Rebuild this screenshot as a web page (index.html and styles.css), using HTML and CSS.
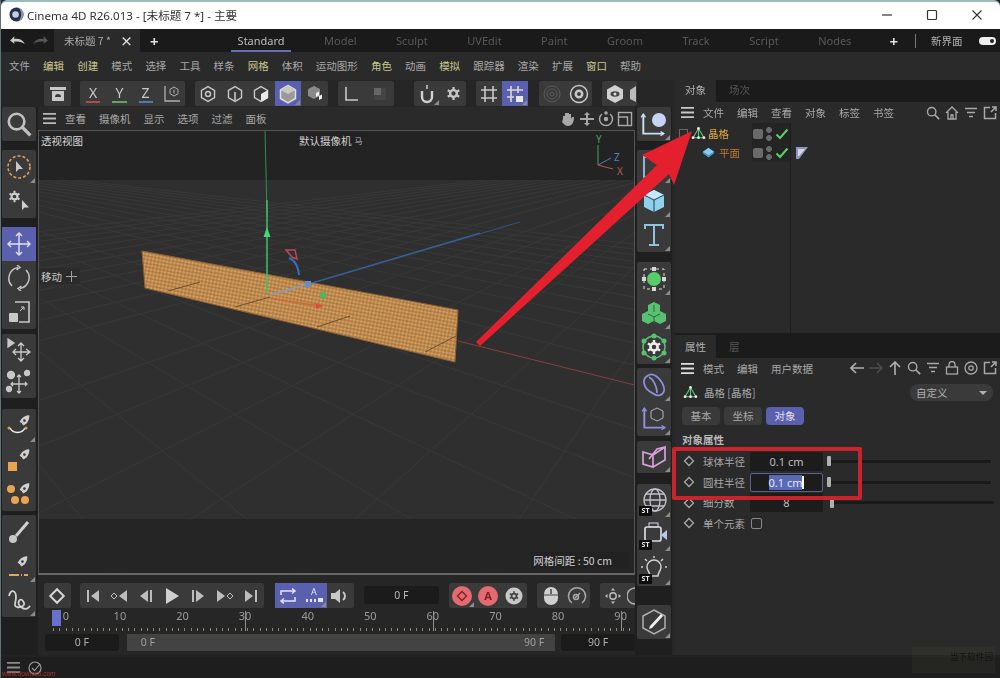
FILE: index.html
```html
<!DOCTYPE html>
<html lang="zh-CN">
<head>
  <meta charset="UTF-8">
  <title>Cinema 4D R26.013</title>
  <link rel="stylesheet" href="styles.css">
</head>
<body>

  <svg class="defs" width="0" height="0">
    <symbol id="burger" viewBox="0 0 16 14"><path d="M1 2h14M1 7h14M1 12h14" stroke="currentColor" stroke-width="2"/></symbol>
    <symbol id="diamond" viewBox="0 0 12 12"><path d="M6 1.500 10.500 6 6 10.500 1.500 6Z" fill="none" stroke="currentColor" stroke-width="1.300"/></symbol>
    <symbol id="gear" viewBox="0 0 16 16"><circle cx="8" cy="8" r="3.600" fill="none" stroke="currentColor" stroke-width="2.600"/><path d="M8 1v2.500M8 12.500V15M1.900 4.500l2.200 1.300M11.900 10.200l2.200 1.300M1.900 11.500l2.200-1.300M11.900 5.800l2.200-1.300" stroke="currentColor" stroke-width="2.400"/></symbol>
    <symbol id="pen" viewBox="0 0 16 16"><path d="M14 1.500c.5 3-1 7-3 9l-3.500 2.500L3 8.500 5.500 5c2-2 5.500-3.700 8.500-3.500Z" fill="currentColor"/><circle cx="8.500" cy="7.500" r="1.500" fill="#3a3a3a"/><path d="M3 13l3-3" stroke="#3a3a3a"/></symbol>
    <symbol id="check" viewBox="0 0 14 12"><path d="M1.500 6.500 5 10l7.500-8.500" fill="none" stroke="currentColor" stroke-width="2"/></symbol>
    <symbol id="lattice" viewBox="0 0 18 18"><path d="M9 3 2.500 14h13ZM9 3v11" fill="none" stroke="#58c878" stroke-width="1.300"/><circle cx="9" cy="3" r="1.700" fill="#e8e8e8"/><circle cx="2.500" cy="14" r="1.700" fill="#e8e8e8"/><circle cx="15.500" cy="14" r="1.700" fill="#e8e8e8"/><circle cx="9" cy="14" r="1.700" fill="#e8e8e8"/></symbol>
    <symbol id="search" viewBox="0 0 16 16"><circle cx="6.500" cy="6.500" r="4.800" fill="none" stroke="currentColor" stroke-width="1.600"/><path d="m10 10 5 5" stroke="currentColor" stroke-width="2"/></symbol>
    <symbol id="expand" viewBox="0 0 14 14"><path d="M7 1.500H1.500v11h11V7M8 6l5-5M9 1h4v4" fill="none" stroke="currentColor" stroke-width="1.500"/></symbol>
    <symbol id="filter" viewBox="0 0 14 14"><path d="M1 2.500h12M3 6.500h8M5 10.500h4" stroke="currentColor" stroke-width="1.700"/></symbol>
    <symbol id="cube" viewBox="0 0 22 22"><path d="M11 2 19 6.500v9L11 20l-8-4.500v-9Z" fill="none" stroke="currentColor" stroke-width="1.700"/></symbol>
    <symbol id="axis" viewBox="0 0 26 26"><path d="M4 3v18h19" fill="none" stroke="currentColor" stroke-width="1.800"/><path d="m2 6 2-3 2 3M20 19l3 2-3 2" fill="none" stroke="currentColor" stroke-width="1.300"/></symbol>
  </svg>

  <div class="window">

    <header class="titlebar">
      <svg class="app-logo" viewBox="0 0 16 16"><circle cx="8" cy="8" r="7.500" fill="#25304d"/><path d="M8 .5a7.500 7.500 0 0 1 0 15A5 7.500 0 0 0 8 .5Z" fill="#8a97b8"/><circle cx="7" cy="8" r="3.500" fill="#c9cedd"/></svg>
      <span class="title-text">Cinema 4D R26.013 - [未标题 7 *] - 主要</span>
      <div class="win-btns">
        <svg viewBox="0 0 12 12"><path d="M1 6h10" stroke="#333" stroke-width="1.200"/></svg>
        <svg viewBox="0 0 12 12"><rect x="1.500" y="1.500" width="9" height="9" rx="1" fill="none" stroke="#333" stroke-width="1.200"/></svg>
        <svg viewBox="0 0 12 12"><path d="m1.500 1.500 9 9m0-9-9 9" stroke="#333" stroke-width="1.100"/></svg>
      </div>
    </header>

    <div class="layoutbar">
      <svg class="undo" viewBox="0 0 16 10"><path d="M1 5h0l4-4v2.500c5-.5 8 1 10 5-3-2.500-6-3-10-2.500V8Z" fill="#c8c8c8"/></svg>
      <svg class="redo" viewBox="0 0 16 10"><path d="M15 5l-4-4v2.500c-5-.5-8 1-10 5 3-2.500 6-3 10-2.500V8Z" fill="#555"/></svg>
      <div class="doc-tab"><span>未标题 7 *</span><b>×</b></div>
      <span class="plus plus-doc">+</span>
      <nav class="layouts">
        <span class="layout on">Standard</span>
        <span class="layout">Model</span>
        <span class="layout">Sculpt</span>
        <span class="layout">UVEdit</span>
        <span class="layout">Paint</span>
        <span class="layout">Groom</span>
        <span class="layout">Track</span>
        <span class="layout">Script</span>
        <span class="layout">Nodes</span>
      </nav>
      <span class="plus plus-layout">+</span>
      <i class="bar-sep"></i>
      <span class="new-ui">新界面</span>
      <span class="toggle"><i></i></span>
    </div>

    <nav class="mainmenu">
      <span>文件</span><span class="hl">编辑</span><span class="hl">创建</span><span>模式</span><span>选择</span><span>工具</span><span>样条</span><span class="hl">网格</span><span>体积</span><span>运动图形</span><span class="hl">角色</span><span>动画</span><span class="hl">模拟</span><span>跟踪器</span><span>渲染</span><span>扩展</span><span class="hl">窗口</span><span>帮助</span>
    </nav>

    <div class="workspace">

      <div class="left-area">
        <div class="toptools">
          <div class="tg g1">
            <div class="b"><svg width="18" height="18" viewBox="0 0 18 18"><path d="M1 2h16v3H1zM3 6h12v10H3z" fill="#c8c8c8"/><path d="M6 12a3 3 0 0 1 6 0Z" fill="#3a3a3a"/></svg></div>
          </div>
          <div class="tg g2">
            <div class="b axis-x">X</div>
            <div class="b axis-y">Y</div>
            <div class="b axis-z">Z</div>
            <div class="b"><svg width="20" height="20" viewBox="0 0 20 20" fill="none" stroke="#b0b0b0"><path d="M3 2v15h15" stroke-width="1.300"/><path d="M12 3l4 2.300v4.400L12 12l-4-2.300V5.300Z"/><path d="M12 5.500v4"/></svg></div>
          </div>
          <div class="tg g3">
            <div class="b"><svg width="18" height="18" color="#c8c8c8"><use href="#cube"/><circle cx="9" cy="9" r="2.500" fill="none" stroke="#c8c8c8" stroke-width="1.400"/></svg></div>
            <div class="b"><svg width="18" height="18" color="#c8c8c8"><use href="#cube"/><path d="M9 7v8" stroke="#c8c8c8" stroke-width="1.600"/></svg></div>
            <div class="b"><svg width="18" height="18" color="#c8c8c8"><use href="#cube"/><path d="m9 9 7-4v8l-7 4Z" fill="#e8e8e8"/></svg></div>
            <div class="b sel tri"><svg width="20" height="20" viewBox="0 0 20 20"><path d="M10 1.500 17.500 6v8.500L10 19l-7.500-4.500V6Z" fill="#9a9a9a" stroke="#e0e0e0" stroke-width="1.500"/><path d="M10 1.500 17.500 6 10 10 2.500 6Z" fill="#c8c8c8"/></svg></div>
            <div class="b"><svg width="18" height="18" viewBox="0 0 18 18"><path d="M8 1l6 3v7l-6 3-6-3V4Z" fill="#8a8a8a"/><path d="M10 8l3-1.500v4L10 12ZM13 11l3-1.500v4L13 15Z" fill="#f0f0f0"/></svg></div>
          </div>
          <div class="tg g4">
            <div class="b"><svg width="18" height="18" viewBox="0 0 18 18"><path d="M3 2v13h12" fill="none" stroke="#c8c8c8" stroke-width="1.600"/></svg></div>
            <div class="b"><svg width="18" height="18" viewBox="0 0 18 18"><rect x="3" y="3" width="12" height="12" fill="#444"/><rect x="3" y="3" width="7" height="7" fill="#666"/></svg></div>
          </div>
          <div class="tg g5">
            <div class="b tri"><svg width="18" height="20" viewBox="0 0 18 20"><path d="M4 7v6a5 5 0 0 0 10 0V7" fill="none" stroke="#d0d0d0" stroke-width="2.400"/><path d="M9 1v4" stroke="#d0d0d0" stroke-width="1.500"/></svg></div>
            <div class="b"><svg width="15" height="15" color="#c8c8c8"><use href="#gear"/></svg></div>
          </div>
          <div class="tg g6">
            <div class="b"><svg width="18" height="18" viewBox="0 0 18 18"><path d="M5 1v16M13 1v16M1 5h16M1 13h16" stroke="#c8c8c8" stroke-width="1.600"/></svg></div>
            <div class="b sel tri"><svg width="18" height="18" viewBox="0 0 18 18"><path d="M5 1v16M12 1v7M1 5h16M1 12h7" stroke="#d8d8d8" stroke-width="1.600"/><rect x="10" y="11" width="7" height="6" fill="#e8e8e8"/></svg></div>
          </div>
          <div class="tg g7">
            <div class="b"><svg width="18" height="18" viewBox="0 0 18 18" fill="none" stroke="#5c5c5c"><circle cx="9" cy="9" r="8"/><circle cx="9" cy="9" r="5"/><circle cx="9" cy="9" r="2"/></svg></div>
            <div class="b"><svg width="20" height="20" viewBox="0 0 20 20" fill="none" stroke="#c8c8c8" stroke-width="1.500"><circle cx="10" cy="10" r="8.500"/><circle cx="10" cy="10" r="3.200" stroke-width="2.500"/></svg></div>
          </div>
          <div class="tg g8">
            <div class="b"><svg width="18" height="20" viewBox="0 0 18 20"><path d="M9 1l8 4.500v9L9 19l-8-4.500v-9Z" fill="#d0d0d0"/><ellipse cx="9" cy="10" rx="4.500" ry="2.800" fill="#444"/><circle cx="9" cy="10" r="1.500" fill="#ddd"/></svg></div>
            <div class="b half"><svg width="6" height="18" viewBox="0 0 6 18"><path d="M6 1 0 5v9l6 3Z" fill="#bbb"/></svg></div>
          </div>
        </div>

        <div class="mid">
          <aside class="leftcol">
            <div class="lg">
              <div class="lb"><svg width="26" height="26" color="#c0c0c0"><use href="#search"/></svg></div>
            </div>
            <div class="lg">
              <div class="lb tri"><svg width="26" height="26" viewBox="0 0 26 26"><circle cx="13" cy="13" r="11" fill="none" stroke="#d9a05f" stroke-width="1.600" stroke-dasharray="3 2"/><path d="M10 7v11l3-3 4 0Z" fill="#c8c8c8"/></svg></div>
              <div class="lb"><svg width="24" height="24" viewBox="0 0 24 24"><use href="#gear" x="1" y="1" width="13" height="13" color="#d0d0d0"/><path d="M15 11v10l2.500-2.500H22Z" fill="#d0d0d0"/></svg></div>
            </div>
            <div class="lg">
              <div class="lb sel"><svg width="26" height="26" viewBox="0 0 26 26" fill="none" stroke="#dfe1ef" stroke-width="1.400"><path d="M13 2v22M2 13h22M10 5l3-3 3 3M10 21l3 3 3-3M5 10l-3 3 3 3M21 10l3 3-3 3"/></svg></div>
              <div class="lb"><svg width="26" height="26" viewBox="0 0 26 26" fill="none" stroke="#c0c0c0" stroke-width="1.500"><path d="M6 21A11 11 0 0 1 12 2.500M20 5a11 11 0 0 1-6 18.500M11 0l3 2.500L10.500 5M15 26l-3-2.500 3.500-2.500"/></svg></div>
              <div class="lb"><svg width="24" height="24" viewBox="0 0 24 24"><path d="M8 2h14v20H12" fill="none" stroke="#c8c8c8" stroke-width="1.600"/><rect x="2" y="13" width="9" height="9" rx="1" fill="#c8c8c8"/><path d="M13 11l4-4M14 7h3v3" fill="none" stroke="#c8c8c8"/></svg></div>
            </div>
            <div class="lg">
              <div class="lb"><svg width="26" height="26" viewBox="0 0 26 26" fill="none" stroke="#c8c8c8" stroke-width="1.300"><path d="M2 2v8l6-4Z" fill="#c8c8c8"/><path d="M15 6v18M7 15h17M12 9l3-3 3 3M12 21l3 3 3-3M10 12l-3 3 3 3M20 12l4 3-4 3"/></svg></div>
              <div class="lb"><svg width="28" height="28" viewBox="0 0 28 28" fill="none" stroke="#c8c8c8" stroke-width="1.300"><circle cx="6" cy="7" r="3.500" fill="#c8c8c8"/><circle cx="22" cy="5" r="2.500" fill="#c8c8c8"/><circle cx="4" cy="21" r="2.500" fill="#c8c8c8"/><path d="M14 7v18M6 16h16M12 9l2-2 2 2M12 23l2 2 2-2M8 14l-2 2 2 2M20 14l2 2-2 2"/></svg></div>
            </div>
            <div class="lg">
              <div class="lb tri"><svg width="26" height="26" viewBox="0 0 26 26"><use href="#pen" x="11" y="1" width="14" height="14" color="#d0d0d0"/><path d="M4 15c3 6 12 6 15 0" fill="none" stroke="#eee" stroke-width="1.500"/><circle cx="3" cy="15" r="1.500" fill="#e0a040"/><circle cx="20" cy="15" r="1.500" fill="#e0a040"/></svg></div>
              <div class="lb"><svg width="26" height="26" viewBox="0 0 26 26"><use href="#pen" x="11" y="1" width="14" height="14" color="#d0d0d0"/><rect x="2" y="15" width="9" height="9" fill="#e8a550"/></svg></div>
              <div class="lb"><svg width="26" height="26" viewBox="0 0 26 26"><use href="#pen" x="11" y="1" width="14" height="14" color="#d0d0d0"/><circle cx="5" cy="8" r="4" fill="#e8a550"/><circle cx="9" cy="19" r="4" fill="#e8a550"/><circle cx="19" cy="19" r="4" fill="#e8a550"/></svg></div>
            </div>
            <div class="lg">
              <div class="lb"><svg width="26" height="26" viewBox="0 0 26 26"><path d="M22 3 10 17" stroke="#d0d0d0" stroke-width="3"/><circle cx="7" cy="20" r="4" fill="#c8c8c8"/></svg></div>
              <div class="lb tri"><svg width="26" height="26" viewBox="0 0 26 26"><use href="#pen" x="9" y="2" width="14" height="14" color="#d0d0d0"/><path d="M3 22h19" stroke="#e0a860" stroke-width="1.800" stroke-dasharray="10 2 1 2"/></svg></div>
              <div class="lb tri"><svg width="26" height="26" viewBox="0 0 26 26"><path d="M3 9c2-8 7-5 7 1s-3 9 1 10c5 1 9-2 6-6s-7 2-2 6 7 1 9-1" fill="none" stroke="#d0d0d0" stroke-width="1.800"/></svg></div>
            </div>
          </aside>

          <section class="center">
            <div class="viewmenu">
              <svg class="burger" color="#b8b8b8"><use href="#burger"/></svg>
              <span>查看</span><span>摄像机</span><span>显示</span><span>选项</span><span>过滤</span><span>面板</span>
              <div class="view-icons">
                <svg width="16" height="16" viewBox="0 0 16 16"><path d="M3 8V5h2V2h2v5-5h2v5-4h2v5l1-2h2c0 5-2 9-6 9-3 0-4-2-6-4Z" fill="#a8a8a8"/></svg>
                <svg width="16" height="16" viewBox="0 0 16 16"><path d="M8 1l3 3H9v3h6v2H9v3h2l-3 3-3-3h2V9H1V7h6V4H5Z" fill="#a8a8a8"/></svg>
                <svg width="16" height="16" viewBox="0 0 16 16" fill="none" stroke="#a8a8a8" stroke-width="1.500"><path d="M4 3a6.500 6.500 0 1 0 8 0"/><circle cx="8" cy="8" r="1.500" fill="#a8a8a8"/><circle cx="8" cy="2" r="1" fill="#a8a8a8"/></svg>
                <svg width="16" height="16" viewBox="0 0 16 16" fill="none" stroke="#a8a8a8" stroke-width="1.400"><rect x="1.500" y="1.500" width="13" height="13"/><path d="M1.500 6h9v8"/></svg>
              </div>
            </div>

            <div class="viewport">
              <svg class="scene" viewBox="38 130 597 443" width="597" height="443">
                <defs>
                  <pattern id="dots" width="3.600" height="3.600" patternUnits="userSpaceOnUse" patternTransform="rotate(11)">
                    <rect width="3.600" height="3.600" fill="#a97a44"/>
                    <circle cx="1.800" cy="1.800" r="1.450" fill="#d79e5e"/>
                  </pattern>
                </defs>
                <rect x="38" y="130" width="597" height="443" fill="#2f2f2f"/>
                <path class="grid" d="M768 147L-3135 600M768 147L-2935 600M768 147L-2735 600M768 147L-2535 600M768 147L-2335 600M768 147L-2135 600M768 147L-1935 600M768 147L-1735 600M768 147L-1535 600M768 147L-1335 600M768 147L-1135 600M768 147L-935 600M768 147L-535 600M768 147L-335 600M768 147L-135 600M768 147L65 600M768 147L265 600M768 147L465 600M768 147L665 600M-214 147L3747 600M-214 147L3547 600M-214 147L3347 600M-214 147L3147 600M-214 147L2947 600M-214 147L2747 600M-214 147L2547 600M-214 147L2347 600M-214 147L2147 600M-214 147L1947 600M-214 147L1747 600M-214 147L1547 600M-214 147L1147 600M-214 147L947 600M-214 147L747 600M-214 147L547 600M-214 147L347 600M-214 147L147 600"/>
                <rect x="38" y="130" width="597" height="50" fill="#232323"/>
                <rect x="38" y="519" width="597" height="54" fill="#212121" fill-opacity=".72"/>
                <path d="M458 341 635 385" stroke="#84413d"/>
                <path d="M310 284 520 222" stroke="#31527f"/>
                <path d="M265 130 267 215" stroke="#2b9350"/>
                <polygon points="142,251 458,310 455,362 145,288" fill="url(#dots)" stroke="#8b6236"/>
                <path class="plane-lines" d="M168 291 200 282M235 307 270 297M317 327 350 316M425 352 456 336"/>
                <path d="M267 200V293" stroke="#37c46a" stroke-width="1.500"/>
                <path d="M267 227l-3.500 10h7Z" fill="#48d47a"/>
                <path d="M270 295 308 284" stroke="#8a9bb5" stroke-width="1.800"/>
                <path d="M308 284 480 233" stroke="#3a64a0" stroke-width="1.200"/>
                <rect x="305" y="281" width="6" height="6" fill="#5f8fd0"/>
                <path d="M270 298 320 306" stroke="#d8643c" stroke-width="1.500"/>
                <path d="M316 303l7 3-7 3Z" fill="#e04c3c"/>
                <circle cx="323" cy="295" r="3.500" fill="#5bb060"/>
                <path d="M286 250h9l2 9-5-2Z" fill="none" stroke="#b84a55" stroke-width="1.500"/>
                <path d="M289 258c6 2 9 8 10 17" fill="none" stroke="#3a6fc0" stroke-width="2"/>
                <path d="M598 145v20" stroke="#4a9a62"/>
                <path d="M598 165l13-7" stroke="#5a7bb5"/>
                <path d="M598 165l15 4" stroke="#b85a52"/>
                <text class="gz gz-y" x="596" y="143">Y</text>
                <text class="gz gz-z" x="614" y="161">Z</text>
                <text class="gz gz-x" x="617" y="175">X</text>
              </svg>
              <span class="vp-label vp-persp">透视视图</span>
              <span class="vp-label vp-cam">默认摄像机 <i class="cam-icon">马</i></span>
              <span class="vp-label vp-move">移动 <svg width="13" height="13" viewBox="0 0 13 13"><path d="M6.500 1v11M1 6.500h11" stroke="#a0a0a0"/></svg></span>
              <span class="vp-label vp-grid">网格间距 : 50 cm</span>
            </div>

            <div class="timeline">
              <div class="transport">
                <div class="tg tl-key"><div class="b"><svg width="18" height="18" color="#d8d8d8"><use href="#diamond"/></svg></div></div>
                <div class="tg tl-play">
                  <div class="pb"><svg width="14" height="14" viewBox="0 0 14 14"><path d="M1 1h2v12H1zM13 1v12L5 7Z" fill="#bdbdbd"/></svg></div>
                  <div class="pb"><svg width="18" height="14" viewBox="0 0 18 14"><path d="M17 1v12L9 7Z" fill="#bdbdbd"/><path d="M4 4 7 7 4 10 1 7Z" fill="none" stroke="#bdbdbd"/></svg></div>
                  <div class="pb"><svg width="14" height="14" viewBox="0 0 14 14"><path d="M11 1h2v12h-2zM9 1v12L1 7Z" fill="#bdbdbd"/></svg></div>
                  <div class="pb"><svg width="16" height="18" viewBox="0 0 16 18"><path d="M2 1v16l13-8Z" fill="#d0d0d0"/></svg></div>
                  <div class="pb"><svg width="14" height="14" viewBox="0 0 14 14"><path d="M1 1h2v12H1zM5 1v12l8-6Z" fill="#bdbdbd"/></svg></div>
                  <div class="pb"><svg width="18" height="14" viewBox="0 0 18 14"><path d="M1 1v12l8-6Z" fill="#bdbdbd"/><path d="M14 4l3 3-3 3-3-3Z" fill="none" stroke="#bdbdbd"/></svg></div>
                  <div class="pb"><svg width="14" height="14" viewBox="0 0 14 14"><path d="M11 1h2v12h-2zM1 1v12l8-6Z" fill="#bdbdbd"/></svg></div>
                </div>
                <div class="tg tl-loop">
                  <div class="b sel"><svg width="18" height="18" viewBox="0 0 18 18" fill="none" stroke="#e4e4f4" stroke-width="1.500"><path d="M2 8V4h13M13 1.500 16 4l-3 2.500M16 10v4H3M5 11.500 2 14l3 2.500"/></svg></div>
                  <div class="b sel tri">
                    <svg width="20" height="20" viewBox="0 0 20 20"><text class="loop-a" x="7" y="9">A</text><path d="M2 13h2v3H2zM6 13h2v3H6zM10 13h2v3h-2zM14 12h5v4h-5z" fill="#e4e4f4"/></svg>
                  </div>
                  <div class="b"><svg width="20" height="18" viewBox="0 0 20 18"><path d="M1 6h4l5-4v14l-5-4H1Z" fill="#c8c8c8"/><path d="M13 5a5 5 0 0 1 0 8" fill="none" stroke="#c8c8c8" stroke-width="2"/></svg></div>
                </div>
                <div class="frame-field">0 F</div>
                <div class="tg tl-rec">
                  <div class="b tri"><span class="rec"><svg width="12" height="12" color="#7c2026"><use href="#diamond"/></svg></span></div>
                  <div class="b"><span class="rec rec-a">A</span></div>
                  <div class="b"><svg width="20" height="20" viewBox="0 0 20 20"><circle cx="10" cy="10" r="8.500" fill="#c8c8c8"/><use href="#gear" x="4.500" y="4.500" width="11" height="11" color="#444"/></svg></div>
                </div>
                <div class="tg tl-auto">
                  <div class="b"><svg width="16" height="20" viewBox="0 0 16 20"><rect x="1" y="1" width="14" height="18" rx="7" fill="#d0d0d0"/><path d="M8 3v5" stroke="#444" stroke-width="1.500"/><path d="M1 9h14" stroke="#444"/></svg></div>
                  <div class="b"><svg width="20" height="20" viewBox="0 0 20 20" fill="none" stroke="#a8a8a8" stroke-width="1.500"><path d="M5 17A8.500 8.500 0 1 1 15 17"/><path d="m8 12 5-5"/><circle cx="9" cy="11" r="2.500"/></svg></div>
                </div>
                <div class="tg tl-nav">
                  <div class="b"><svg width="18" height="18" viewBox="0 0 18 18" fill="#c0c0c0"><circle cx="9" cy="9" r="3.200" fill="none" stroke="#c0c0c0" stroke-width="1.400"/><path d="M9 1l2 2.500H7ZM9 17l2-2.500H7ZM1 9l2.500-2v4ZM17 9l-2.500-2v4Z"/></svg></div>
                  <div class="b half"><svg width="8" height="18" viewBox="0 0 8 18"><path d="M8 1A8 8 0 0 0 8 17" fill="none" stroke="#b0b0b0" stroke-width="1.500"/></svg></div>
                </div>
              </div>

              <div class="ruler">
                <span class="playhead"></span>
                <span class="first">0</span><span>10</span><span>20</span><span class="major">30</span><span>40</span><span>50</span><span class="major">60</span><span>70</span><span>80</span><span class="major">90</span>
              </div>

              <div class="range">
                <div class="range-field">0 F</div>
                <div class="range-bar"><span>0 F</span><span>90 F</span></div>
                <div class="range-field">90 F</div>
              </div>
            </div>
          </section>

          <aside class="rightcol">
            <div class="lg rg1">
              <div class="lb tri"><svg width="30" height="30" viewBox="0 0 30 30"><use href="#axis" width="28" height="28" y="2" color="#c8e0f0"/><circle cx="20" cy="11" r="7" fill="#c8d4f4"/></svg></div>
            </div>
            <div class="lg rg2">
              <div class="lb tri"><svg width="26" height="26" viewBox="0 0 26 26"><rect x="3" y="3" width="20" height="20" fill="none" stroke="#8fb4d0" stroke-width="2"/></svg></div>
              <div class="lb tri"><svg width="26" height="26" viewBox="0 0 26 26"><path d="M13 2 23 7v12l-10 5L3 19V7Z" fill="#8fd0ee"/><path d="M13 2 23 7l-10 5L3 7Z" fill="#c4e8f8"/><path d="M13 12v12" stroke="#2d3a44"/><path d="M3 7l10 5 10-5" fill="none" stroke="#2d3a44"/></svg></div>
              <div class="lb tri"><svg width="26" height="26" viewBox="0 0 26 26"><path d="M4 7V3h18v4M13 3v20M8 23h10" fill="none" stroke="#8cc4dc" stroke-width="2"/></svg></div>
            </div>
            <div class="lg rg3">
              <div class="lb tri"><svg width="28" height="28" viewBox="0 0 28 28"><rect x="4" y="4" width="20" height="20" fill="none" stroke="#ddd" stroke-dasharray="3 3"/><circle cx="14" cy="14" r="7" fill="#58cc6c"/><path d="M12 2h4v4h-4zM2 12h4v4H2zM22 12h4v4h-4zM12 22h4v4h-4z" fill="#d8d8d8"/></svg></div>
              <div class="lb tri"><svg width="26" height="26" viewBox="0 0 26 26"><path d="M13 2l6 3v6l6 3v7l-6 3-6-3-6 3-6-3v-7l6-3V5Z" fill="#58c070"/><path d="M7 14l6 3 6-3M13 5v7M13 17v7" stroke="#2d6a3a" fill="none"/></svg></div>
              <div class="lb tri"><svg width="28" height="28" viewBox="0 0 28 28"><circle cx="14" cy="14" r="11" fill="none" stroke="#58c070" stroke-width="1.500"/><use href="#gear" x="6" y="6" width="16" height="16" color="#eee"/><circle cx="14" cy="3" r="2.500" fill="#58c070"/><circle cx="14" cy="25" r="2.500" fill="#58c070"/><circle cx="4" cy="8" r="2.500" fill="#58c070"/><circle cx="24" cy="8" r="2.500" fill="#58c070"/><circle cx="4" cy="20" r="2.500" fill="#58c070"/><circle cx="24" cy="20" r="2.500" fill="#58c070"/></svg></div>
            </div>
            <div class="lg rg4">
              <div class="lb tri"><svg width="26" height="26" viewBox="0 0 26 26" fill="none" stroke="#8f8fe0" stroke-width="1.700"><path d="M3 11C2 5 9 1 13 3c5 2 11 10 10 16-1 4-6 6-10 3C8 19 4 17 3 11Z"/><path d="M8 5c4 2 8 9 8 16"/></svg></div>
              <div class="lb tri"><svg width="28" height="28" viewBox="0 0 28 28"><use href="#axis" width="28" height="28" color="#8f8fe0"/><path d="M17 3l6 3v7l-6 3-6-3V6Z" fill="none" stroke="#b0b0c0"/></svg></div>
            </div>
            <div class="lg rg5">
              <div class="lb tri"><svg width="26" height="26" viewBox="0 0 26 26" fill="none" stroke="#d8a0d8" stroke-width="1.700"><path d="M2 8l10 3v12L2 20ZM12 11 24 3v13l-12 7M8 15l8-10 8-2"/></svg></div>
            </div>
            <div class="lg rg6">
              <div class="lb tri"><svg width="28" height="28" viewBox="0 0 28 28" fill="none" stroke="#c0c0c8" stroke-width="1.300"><circle cx="15" cy="13" r="11"/><ellipse cx="15" cy="13" rx="5" ry="11"/><path d="M4 13h22M6 7h18M6 19h18"/></svg><b class="st">ST</b></div>
              <div class="lb tri"><svg width="28" height="28" viewBox="0 0 28 28"><rect x="5" y="6" width="16" height="14" rx="2" fill="none" stroke="#d8d8e4" stroke-width="1.700"/><path d="M22 13l5-4v10l-5-4Z" fill="#b8c8f0"/><rect x="9" y="2" width="9" height="4" fill="none" stroke="#d8d8e4"/></svg><b class="st">ST</b></div>
              <div class="lb tri"><svg width="28" height="28" viewBox="0 0 28 28" fill="none" stroke="#d0d0d0" stroke-width="1.500"><path d="M10 21c0-4-3-5-3-9a7 7 0 0 1 14 0c0 4-3 5-3 9ZM14 1v2M3 12H1M27 12h-2M5 4l2 2M23 4l-2 2"/></svg><b class="st">ST</b></div>
            </div>
            <div class="lg rg7">
              <div class="lb tri"><svg width="28" height="28" viewBox="0 0 28 28"><path d="M14 2 25 8v12l-11 6-11-6V8Z" fill="none" stroke="#b0b0b0" stroke-width="1.500"/><path d="M10 18 21 6l2 2L12 20l-3 1Z" fill="#f0f0f0"/></svg></div>
            </div>
          </aside>
        </div>
      </div>

      <div class="panels">
        <section class="objects">
          <div class="ptabs"><span class="ptab on">对象</span><span class="ptab">场次</span></div>
          <div class="pmenu">
            <svg class="burger" color="#c8c8c8"><use href="#burger"/></svg>
            <span>文件</span><span>编辑</span><span>查看</span><span>对象</span><span>标签</span><span>书签</span>
            <div class="picons">
              <svg color="#a8a8a8"><use href="#search"/></svg>
              <svg viewBox="0 0 14 14" fill="none" stroke="#a8a8a8" stroke-width="1.300"><path d="M1 7 7 1l6 6M3 6v7h8V6M6 13V9h2v4"/></svg>
              <svg color="#a8a8a8"><use href="#filter"/></svg>
              <svg color="#a8a8a8"><use href="#expand"/></svg>
            </div>
          </div>
          <div class="tree">
            <div class="tree-names">
              <div class="node">
                <i class="fold"></i>
                <svg class="node-icon"><use href="#lattice"/></svg>
                <span class="name-lattice">晶格</span>
              </div>
              <div class="node node-child">
                <svg class="node-icon plane-icon" viewBox="0 0 16 16"><path d="M8 2l7 5-7 5-7-5Z" fill="#80cdf0"/><path d="M1 7l7 5 7-5v2l-7 5-7-5Z" fill="#4a9ccc"/></svg>
                <span class="name-plane">平面</span>
              </div>
              <div class="tags">
                <div class="tag-row"><i class="vis-box"></i><i class="vis-dots"></i><svg width="14" height="12" color="#5fd067"><use href="#check"/></svg></div>
                <div class="tag-row"><i class="vis-box"></i><i class="vis-dots"></i><svg width="14" height="12" color="#5fd067"><use href="#check"/></svg></div>
              </div>
            </div>
            <div class="tree-tags"><svg width="12" height="12" viewBox="0 0 12 12"><path d="M0 0h12L3 12H0Z" fill="#8e94c8"/><path d="M2 2h7L3 9H2Z" fill="#d8d8d8"/></svg></div>
          </div>
        </section>

        <section class="attrs">
          <div class="ptabs"><span class="ptab on">属性</span><span class="ptab">层</span></div>
          <div class="pmenu amenu">
            <svg class="burger" color="#e0e0e0"><use href="#burger"/></svg>
            <span>模式</span><span>编辑</span><span>用户数据</span>
            <div class="picons aicons">
              <svg viewBox="0 0 14 14" fill="none" stroke="#b0b0b0" stroke-width="1.600"><path d="M14 7H1M6 2 1 7l5 5"/></svg>
              <svg viewBox="0 0 14 14" fill="none" stroke="#4a4a4a" stroke-width="1.500"><path d="M0 7h13M8 2l5 5-5 5"/></svg>
              <svg viewBox="0 0 14 14" fill="none" stroke="#b0b0b0" stroke-width="1.600"><path d="M7 14V1M2 6l5-5 5 5"/></svg>
              <svg color="#a8a8a8"><use href="#search"/></svg>
              <svg color="#a8a8a8"><use href="#filter"/></svg>
              <svg viewBox="0 0 14 14" fill="none" stroke="#a8a8a8" stroke-width="1.300"><rect x="1.500" y="6" width="11" height="7"/><path d="M4 6V3.500a3 3 0 0 1 6 0V6"/></svg>
              <svg viewBox="0 0 14 14" fill="none" stroke="#a8a8a8" stroke-width="1.300"><circle cx="7" cy="7" r="6"/><circle cx="7" cy="7" r="2.200"/></svg>
              <svg color="#a8a8a8"><use href="#expand"/></svg>
            </div>
          </div>
          <div class="obj-title">
            <svg class="node-icon"><use href="#lattice"/></svg>
            <span>晶格 [晶格]</span>
            <div class="preset"><span>自定义</span><i></i></div>
          </div>
          <div class="attr-tabs">
            <span>基本</span><span>坐标</span><span class="on">对象</span>
          </div>
          <h3 class="attr-head">对象属性</h3>
          <div class="attr-row">
            <svg class="attr-key" color="#a8a8a8"><use href="#diamond"/></svg>
            <label>球体半径</label>
            <div class="field">0.1 cm</div>
            <i class="handle"></i>
            <i class="track"></i>
          </div>
          <div class="attr-row">
            <svg class="attr-key" color="#a8a8a8"><use href="#diamond"/></svg>
            <label>圆柱半径</label>
            <div class="field editing"><span class="selected">0.1 cm</span><i class="caret"></i></div>
            <i class="handle"></i>
            <i class="track"></i>
          </div>
          <div class="attr-row">
            <svg class="attr-key" color="#a8a8a8"><use href="#diamond"/></svg>
            <label>细分数</label>
            <div class="field">8</div>
            <i class="handle handle-8"></i>
            <i class="track"></i>
          </div>
          <div class="attr-row">
            <svg class="attr-key" color="#a8a8a8"><use href="#diamond"/></svg>
            <label>单个元素</label>
            <i class="checkbox"></i>
          </div>
        </section>
      </div>
    </div>

    <footer class="statusbar">
      <svg class="burger" color="#8a8a8a"><use href="#burger"/></svg>
      <svg class="status-check" viewBox="0 0 14 14" fill="none" stroke="#a0a0a0" stroke-width="1.100"><circle cx="7" cy="7" r="6"/><path d="m4 7 2.500 2.500L12 3"/></svg>
      <span class="wm-left">www.downxia.com</span>
      <span class="wm-right">当下软件园</span>
    </footer>

    <!-- annotations on top of the screenshot -->
    <svg class="arrow" viewBox="0 0 1000 678" width="1000" height="678">
      <polygon points="692,131 642,155 657,165 476,342 480,346 669,174 674,185" fill="#e5202e"/>
    </svg>
    <div class="redbox"></div>
  </div>

</body>
</html>
```

FILE: styles.css
```css
* {
  box-sizing: border-box;
}

html, body {
  margin: 0;
  height: 100%;
}

body {
  width: 1000px;
  height: 678px;
  overflow: hidden;
  background: #262626;
  font-family: "Noto Sans CJK SC", "Noto Sans", sans-serif;
  font-size: 10.5px;
  color: #a8a8a8;
}

i {
  font-style: normal;
}

.defs {
  position: absolute;
}

/* the source is a soft jpeg */
.window {
  position: relative;
  width: 1000px;
  height: 678px;
  display: flex;
  flex-direction: column;
  border-left: 1px solid #5c7478;
  filter: blur(.35px);
}

/* title bar */
.titlebar {
  flex: 0 0 29px;
  display: flex;
  align-items: center;
  background: #fff;
  border-top: 2px solid #9dbcbf;
  border-radius: 6px 6px 0 0;
  padding: 0 0 2px 8px;
}

.app-logo {
  width: 15px;
  height: 15px;
  margin-right: 3px;
}

.title-text {
  font-size: 11.6px;
  color: #333;
  font-family: "Noto Sans", "Noto Sans CJK SC", sans-serif;
}

.win-btns {
  margin-left: auto;
  display: flex;
  gap: 33px;
  padding-right: 17px;
}

.win-btns svg {
  width: 12px;
  height: 12px;
}

/* layout bar */
.layoutbar {
  flex: 0 0 23px;
  display: flex;
  align-items: center;
  background: #1a1a1a;
  position: relative;
}

.undo, .redo {
  width: 17px;
  height: 11px;
}

.undo {
  margin-left: 8px;
}

.redo {
  margin-left: 6px;
}

.doc-tab {
  margin-left: 5px;
  width: 86px;
  height: 23px;
  background: #2a2a2a;
  display: flex;
  align-items: center;
  padding-left: 10px;
  font-size: 10.5px;
  color: #a8a8a8;
}

.doc-tab b {
  margin-left: auto;
  margin-right: 7px;
  font-size: 13px;
  color: #ddd;
}

.plus {
  font: bold 15px "Noto Sans", sans-serif;
  color: #ddd;
}

.plus-doc {
  margin-left: 10px;
}

.layouts {
  display: flex;
  margin-left: 79px;
  gap: 39.500px;
}

.layout {
  position: relative;
  font: 11px "Noto Sans", sans-serif;
  color: #585858;
  line-height: 23px;
}

.layout.on {
  color: #bdbdbd;
}

.layout.on::after {
  content: "";
  position: absolute;
  left: -7px;
  right: -6px;
  bottom: 0;
  height: 2.500px;
  background: #6a6db4;
}

.plus-layout {
  margin-left: 38px;
}

.bar-sep {
  width: 1px;
  height: 14px;
  background: #777;
  margin-left: 17px;
}

.new-ui {
  margin-left: 15px;
  color: #b0b0b0;
}

.toggle {
  margin-left: 16px;
  width: 17px;
  height: 8px;
  border-radius: 4px;
  background: #eee;
  display: flex;
  align-items: center;
  justify-content: flex-end;
  padding-right: 2px;
}

.toggle i {
  width: 4px;
  height: 4px;
  border-radius: 50%;
  background: #222;
}

/* main menu */
.mainmenu {
  flex: 0 0 28px;
  display: flex;
  align-items: center;
  gap: 13.100px;
  padding: 0 0 2px 8px;
  background: #2a2a2a;
}

.mainmenu .hl {
  color: #c8c88c;
}

/* workspace */
.workspace {
  flex: 1;
  display: flex;
  min-height: 0;
}

.left-area {
  width: 671px;
  display: flex;
  flex-direction: column;
}

.toptools {
  flex: 0 0 27px;
  display: flex;
  align-items: center;
  padding-left: 43px;
  background: #262626;
}

.tg {
  display: flex;
  height: 25px;
  background: #3a3a3a;
  border-radius: 2px;
}

.g1 { width: 27px; }
.g2 { width: 105px; margin-left: 9px; }
.g3 { width: 133px; margin-left: 10px; }
.g4 { width: 56px; margin-left: 10px; }
.g5 { width: 52px; margin-left: 20px; }
.g6 { width: 52px; margin-left: 10px; }
.g7 { width: 53px; margin-left: 11px; }
.g8 { width: 35px; margin-left: 10px; overflow: hidden; }

.b {
  position: relative;
  flex: 1;
  min-width: 0;
  display: flex;
  align-items: center;
  justify-content: center;
  height: 100%;
}

.b.half {
  flex: 0 0 9px;
}

.sel {
  background: #5a60ae;
}

.tri::after {
  content: "";
  position: absolute;
  right: 1px;
  bottom: 1px;
  border-style: solid;
  border-width: 0 0 5px 5px;
  border-color: transparent transparent #8c8c8c transparent;
}

.axis-x, .axis-y, .axis-z {
  font: 14px "Noto Sans", sans-serif;
  padding-bottom: 3px;
  color: #c8c8c8;
}

.axis-x::after, .axis-y::after, .axis-z::after {
  content: "";
  position: absolute;
  left: 6px;
  right: 6px;
  bottom: 3px;
  height: 2px;
}

.axis-x::after { background: #b04a48; }
.axis-y::after { background: #58a860; }
.axis-z::after { background: #4a78b8; }

.mid {
  flex: 1;
  display: flex;
  min-height: 0;
}

/* left and right tool columns */
.leftcol {
  width: 37px;
  padding-left: 1px;
  background: #1f1f1f;
}

.lg {
  width: 34px;
  background: #3a3a3a;
  border-radius: 2px;
  margin-bottom: 9px;
}

.lb {
  position: relative;
  height: 34px;
  display: flex;
  align-items: center;
  justify-content: center;
}

.leftcol .lg:nth-child(3) { margin-bottom: 5px; }
.leftcol .lg:nth-child(4) { margin-bottom: 11px; }
.leftcol .lg:nth-child(4) .lb { height: 32px; }
.leftcol .lg:nth-child(5) { margin-bottom: 4px; }

.rightcol {
  width: 37px;
  background: #1f1f1f;
  padding-left: 2px;
}

.rightcol .rg1 { margin-bottom: 9px; }
.rightcol .rg2 { margin-bottom: 10px; }
.rightcol .rg3 { margin-bottom: 4px; }
.rightcol .rg4 { margin-bottom: 5px; }
.rightcol .rg5 { margin-bottom: 11px; }
.rightcol .rg6 { margin-bottom: 19px; }
.rg5 .lb { height: 32px; }

.st {
  position: absolute;
  left: 2px;
  bottom: 2px;
  width: 13px;
  height: 10px;
  background: #0d0d0d;
  border-radius: 1px;
  color: #e8e8e8;
  font: bold 7px/10px "Noto Sans", sans-serif;
  text-align: center;
}

/* viewport */
.center {
  width: 597px;
  display: flex;
  flex-direction: column;
  background: #262626;
}

.viewmenu {
  flex: 0 0 23px;
  display: flex;
  align-items: center;
  padding-left: 4px;
  gap: 13px;
  background: #2a2a2a;
}

.burger {
  width: 15px;
  height: 13px;
  flex: none;
  margin-right: -5px;
}

.view-icons {
  margin-left: auto;
  display: flex;
  gap: 3px;
  padding-right: 2px;
}

.viewport {
  position: relative;
  flex: 0 0 445px;
  border-bottom: 2px solid #666;
  border-left: 1px solid #555;
  border-right: 1px solid #555;
  border-top: 1px solid #555;
  overflow: hidden;
}

.scene {
  display: block;
  margin: -1px 0 0 -1px;
}

.grid {
  stroke: #393939;
  stroke-width: .9;
  fill: none;
}

.plane-lines {
  stroke: #6e5230;
  stroke-width: 1;
}

.gz {
  font: 10px "Noto Sans", sans-serif;
}

.gz-y { fill: #4a9a62; }
.gz-z { fill: #5a7bb5; }
.gz-x { fill: #b85a52; }

.vp-label {
  position: absolute;
  display: flex;
  align-items: center;
  gap: 3px;
  height: 16px;
  padding: 0 2px;
  background: #222;
  color: #d0d0d0;
}

.vp-persp { left: 0; top: 1px; }
.vp-cam { left: 258px; top: 1px; }
.vp-move { left: 0; top: 137px; color: #c8c8c8; background: #2b2b2b; }
.vp-grid { right: 4px; top: 421px; padding: 0 18px 0 2px; }

.cam-icon {
  color: #b0b8d0;
  font-size: 8px;
}

/* timeline */
.timeline {
  flex: 1;
  padding-top: 8px;
}

.transport {
  display: flex;
  align-items: flex-start;
  padding-left: 6px;
}

.tl-key { width: 27px; }
.tl-play { width: 185px; margin-left: 9px; }
.tl-loop { width: 79px; margin-left: 11px; }
.tl-loop .b { flex: 0 0 26px; }
.frame-field {
  width: 75px;
  height: 18px;
  margin: 3px 0 0 10px;
  background: #1b1b1b;
  border-radius: 3px;
  text-align: center;
  line-height: 18px;
  font-family: "Noto Sans", sans-serif;
  color: #b8b8b8;
}
.tl-rec { width: 79px; margin-left: 10px; }
.tl-auto { width: 53px; margin-left: 10px; }
.tl-nav { width: 35px; margin-left: 10px; overflow: hidden; }

.pb {
  flex: 1;
  display: flex;
  align-items: center;
  justify-content: center;
}

.loop-a {
  font: 9px "Noto Sans", sans-serif;
  fill: #e4e4f4;
}

.rec {
  width: 20px;
  height: 20px;
  border-radius: 50%;
  background: #e36a6e;
  display: flex;
  align-items: center;
  justify-content: center;
}

.rec-a {
  color: #7c2026;
  font: bold 11px "Noto Sans", sans-serif;
}

.ruler {
  position: relative;
  display: flex;
  height: 24px;
  margin-top: 1px;
  font: 11px "Noto Sans", sans-serif;
  color: #9a9a9a;
  background-image: repeating-linear-gradient(90deg, #8a8a6a 0, #8a8a6a 1px, transparent 1px, transparent 6.260px);
  background-size: 578px 3px;
  background-repeat: no-repeat;
  background-position: 15px 19px;
}

.ruler span {
  position: relative;
  flex: 0 0 62.600px;
  text-align: center;
  line-height: 14px;
}

.ruler .first {
  margin-left: -12px;
  padding-left: 17px;
}

.ruler .major::after {
  content: "";
  position: absolute;
  left: 50%;
  top: 2px;
  width: 1px;
  height: 20px;
  background: #909090;
}

.ruler .playhead {
  position: absolute;
  left: 14px;
  top: 1px;
  width: 9px;
  height: 16px;
  flex: none;
  background: #6a70d0;
}

.range {
  display: flex;
  gap: 8px;
  margin-top: 1px;
  padding-left: 7px;
  align-items: center;
  font-family: "Noto Sans", sans-serif;
}

.range-field {
  width: 74px;
  height: 17px;
  background: #1b1b1b;
  border-radius: 3px;
  text-align: center;
  line-height: 17px;
  color: #b0b0b0;
}

.range-bar {
  width: 430px;
  height: 17px;
  background: #434343;
  display: flex;
  justify-content: space-between;
  padding: 0 11px 0 14px;
  line-height: 17px;
  color: #a0a0a0;
}

.range-bar + .range-field {
  margin-left: -2px;
}

/* right panels */
.panels {
  flex: 1;
  margin-left: 3px;
  display: flex;
  flex-direction: column;
  background: #1c1c1c;
}

.objects {
  flex: 0 0 253px;
  display: flex;
  flex-direction: column;
  background: #2a2a2a;
}

.ptabs {
  flex: 0 0 22px;
  height: 22px;
  display: flex;
  background: #1b1b1b;
}

.ptab {
  padding: 0 10px;
  line-height: 20px;
  color: #555;
  margin-right: 3px;
}

.ptab.on {
  background: #2a2a2a;
  color: #b0b0b0;
}

.pmenu {
  flex: 0 0 21px;
  height: 21px;
  display: flex;
  align-items: center;
  gap: 13px;
  padding-left: 5px;
}

.picons {
  margin-left: auto;
  display: flex;
  gap: 5px;
  padding-right: 3px;
}

.picons svg {
  width: 14px;
  height: 14px;
}

.aicons {
  gap: 5px;
}

.tree {
  flex: 1;
  display: flex;
}

.tree-names {
  position: relative;
  width: 116px;
  border-right: 1px solid #1e1e1e;
  padding-top: 1px;
}

.node {
  display: flex;
  align-items: center;
  height: 19px;
  padding-left: 4px;
  gap: 2px;
}

.node-child {
  padding-left: 27px;
}

.fold {
  width: 9px;
  height: 9px;
  border: 1px solid #666;
  margin-right: 1px;
}

.node-icon {
  width: 15px;
  height: 15px;
  flex: none;
}

.name-lattice { color: #e2ac3e; }
.name-plane { color: #bf7a32; margin-left: 2px; }
.plane-icon { width: 13px; height: 13px; }

.tags {
  position: absolute;
  right: 0;
  top: 0;
  width: 38px;
  background: #242424;
  padding-top: 1px;
}

.tag-row {
  height: 19px;
  display: flex;
  align-items: center;
  gap: 3px;
  padding-left: 1px;
}

.vis-box {
  width: 10px;
  height: 10px;
  background: #6a6a6a;
  border-radius: 2px;
}

.vis-dots {
  width: 6px;
  height: 14px;
  background: radial-gradient(circle at 3px 3px, #6a6a6a 2.800px, transparent 3px), radial-gradient(circle at 3px 11px, #6a6a6a 2.800px, transparent 3px);
}

.tree-tags {
  padding: 24px 0 0 5px;
}

.attrs {
  flex: 1;
  margin-top: 2px;
  background: #2a2a2a;
}

.attrs .ptabs {
  height: 23px;
}

.attrs .ptab {
  line-height: 23px;
}

.amenu {
  height: 20px;
}

.obj-title {
  display: flex;
  align-items: center;
  gap: 6px;
  height: 27px;
  padding: 2px 7px 0 8px;
}

.preset {
  margin-left: auto;
  width: 83px;
  height: 17px;
  background: #3a3a3a;
  border-radius: 8px;
  display: flex;
  align-items: center;
  justify-content: space-between;
  padding: 0 6px;
  color: #b0b0b0;
}

.preset i {
  border-style: solid;
  border-width: 4px 4px 0;
  border-color: #b0b0b0 transparent transparent;
}

.attr-tabs {
  display: flex;
  gap: 4px;
  padding-left: 7px;
  margin-top: 2px;
}

.attr-tabs span {
  width: 38px;
  height: 18px;
  line-height: 18px;
  text-align: center;
  background: #3a3a3a;
  border-radius: 4px;
}

.attr-tabs .on {
  background: #5a60ae;
  color: #e0e0f0;
}

.attr-head {
  margin: 7px 0 3px 7px;
  font-size: 10.5px;
  font-weight: 700;
  line-height: 16px;
  color: #b8b8b8;
}

.attr-row {
  display: flex;
  align-items: center;
  height: 20.700px;
  padding-left: 8px;
}

.attr-key {
  width: 12px;
  height: 12px;
  flex: none;
}

.attr-row label {
  width: 47px;
  margin-left: 8px;
}

.field {
  width: 73px;
  height: 19px;
  line-height: 19px;
  background: #1c1c1c;
  border-radius: 2px;
  text-align: center;
  color: #bcbcbc;
  font-family: "Noto Sans", sans-serif;
  font-size: 11px;
}

.field.editing {
  border: 1px solid #56618c;
  line-height: 17px;
}

.selected {
  background: #5a68b8;
  color: #e6e8f8;
}

.caret {
  display: inline-block;
  width: 2px;
  height: 13px;
  background: #fff;
  vertical-align: -2px;
}

.handle {
  width: 4px;
  height: 10px;
  background: #b0b0b0;
  border-radius: 1px;
  margin-left: 4px;
  flex: none;
}

.handle-8 {
  margin-left: 7px;
}

.track {
  flex: 0 1 160px;
  height: 3px;
  background: #1a1a1a;
}

.checkbox {
  width: 11px;
  height: 11px;
  border: 1px solid #888;
  border-radius: 2px;
  margin-left: 1px;
}

/* status bar */
.statusbar {
  position: relative;
  flex: 0 0 23px;
  display: flex;
  align-items: center;
  gap: 7px;
  padding-left: 5px;
  background: #1e1e1e;
  border-top: 2px solid #222;
}

.statusbar .burger {
  margin-right: 0;
}

.status-check {
  width: 14px;
  height: 14px;
}

.wm-left {
  position: absolute;
  left: 1px;
  bottom: 0;
  font: 6.500px/8px "Liberation Sans", sans-serif;
  color: #b03030;
}

.wm-right {
  position: absolute;
  right: 5px;
  top: -10px;
  width: 83px;
  height: 26px;
  padding-left: 38px;
  line-height: 18px;
  font-size: 8.600px;
  white-space: nowrap;
  color: #141414;
  background: rgba(70, 70, 50, .18);
}

/* annotations */
.arrow {
  position: absolute;
  left: -1px;
  top: 0;
  pointer-events: none;
}

.redbox {
  position: absolute;
  left: 671px;
  top: 447px;
  width: 190px;
  height: 53px;
  border: 4px solid #c8242c;
  border-radius: 2px;
  pointer-events: none;
}
```
